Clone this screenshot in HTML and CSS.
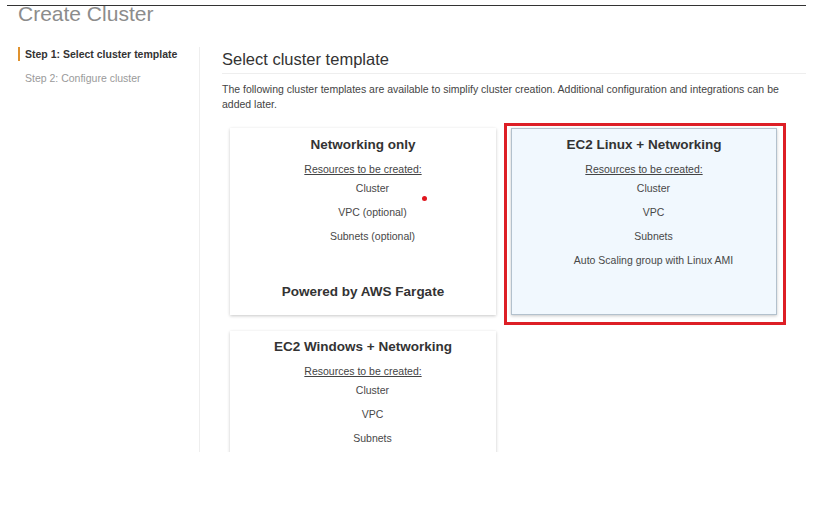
FILE: index.html
```html
<!DOCTYPE html>
<html>
<head>
<meta charset="utf-8">
<link rel="stylesheet" href="styles.css">
</head>
<body>
<div class="page">
  <header class="header">
    <h1 class="title">Create Cluster</h1>
  </header>
  <div class="layout">
    <nav class="sidebar">
      <div class="step step-active">Step 1: Select cluster template</div>
      <div class="step">Step 2: Configure cluster</div>
    </nav>
    <main class="main">
      <h2 class="heading">Select cluster template</h2>
      <p class="intro">The following cluster templates are available to simplify cluster creation. Additional configuration and integrations can be added later.</p>
      <div class="cards">
        <div class="card">
          <div class="card-title">Networking only</div>
          <div class="res-label">Resources to be created:</div>
          <div class="res-item">Cluster</div>
          <div class="res-item">VPC (optional)</div>
          <div class="res-item">Subnets (optional)</div>
          <div class="card-foot">Powered by AWS Fargate</div>
          <span class="dot"></span>
        </div>
        <div class="card card-selected">
          <div class="card-title">EC2 Linux + Networking</div>
          <div class="res-label">Resources to be created:</div>
          <div class="res-item">Cluster</div>
          <div class="res-item">VPC</div>
          <div class="res-item">Subnets</div>
          <div class="res-item">Auto Scaling group with Linux AMI</div>
        </div>
        <div class="card">
          <div class="card-title card-title-alt">EC2 Windows + Networking</div>
          <div class="res-label">Resources to be created:</div>
          <div class="res-item">Cluster</div>
          <div class="res-item">VPC</div>
          <div class="res-item">Subnets</div>
        </div>
      </div>
    </main>
  </div>
</div>
</body>
</html>
```

FILE: styles.css
```css
* { box-sizing: border-box; }

body {
  margin: 0;
  background: #fff;
  font-family: "Liberation Sans", Arial, sans-serif;
  color: #444;
}

.page {
  height: 452px;
  overflow: hidden;
}

.header {
  margin: 5px 15px 0 7px;
  border-top: 1px solid #333;
  padding-left: 11px;
}

.title {
  margin: 0;
  font-size: 21px;
  line-height: 16px;
  font-weight: normal;
  color: #8c8c8c;
}

.layout {
  display: flex;
  padding-top: 25px;
}

.sidebar {
  width: 200px;
  padding-left: 18px;
  border-right: 1px solid #eeeeee;
  min-height: 420px;
}

.step {
  font-size: 10.5px;
  line-height: 14px;
  color: #9a9a9a;
  padding-left: 7px;
  margin-bottom: 10px;
}

.step-active {
  font-weight: bold;
  color: #333;
  border-left: 2px solid #e0922e;
  padding-left: 5px;
}

.main {
  flex: 1;
  margin: 0 15px 0 22px;
}

.heading {
  margin: 2px 0 0;
  font-size: 16.5px;
  line-height: 20px;
  font-weight: normal;
  color: #333;
  padding-bottom: 4px;
  border-bottom: 1px solid #eeeeee;
}

.intro {
  margin: 8px 0 0;
  font-size: 10.5px;
  line-height: 15px;
  color: #444;
}

.cards {
  display: grid;
  grid-template-columns: 266px 266px;
  column-gap: 15px;
  row-gap: 16px;
  margin: 16px 0 0 8px;
}

.card {
  position: relative;
  height: 187px;
  background: #fff;
  box-shadow: 0 1px 3px rgba(0, 0, 0, 0.22);
  padding: 9px 10px 15px;
  display: flex;
  flex-direction: column;
  align-items: center;
  text-align: center;
}

.card-selected {
  background: #f1f8fe;
  border: 1px solid #b3c1cd;
  padding-top: 8px;
}

.card-selected::after {
  content: "";
  position: absolute;
  left: -8px;
  top: -6px;
  right: -10px;
  bottom: -11px;
  border: 3px solid #dd1f26;
}

.card-title {
  font-size: 13.5px;
  line-height: 16px;
  font-weight: bold;
  color: #333;
  margin-bottom: 9px;
}

.card-title-alt {
  margin-top: -1px;
}

.res-label {
  font-size: 10.5px;
  line-height: 14px;
  text-decoration: underline;
  color: #444;
}

.res-item {
  font-size: 10.5px;
  line-height: 24px;
  color: #484848;
  padding-left: 19px;
}

.card-foot {
  margin-top: auto;
  font-size: 13.5px;
  line-height: 16px;
  font-weight: bold;
  color: #333;
}

.dot {
  position: absolute;
  left: 192px;
  top: 68px;
  width: 5px;
  height: 5px;
  border-radius: 50%;
  background: #e0161e;
}
```
